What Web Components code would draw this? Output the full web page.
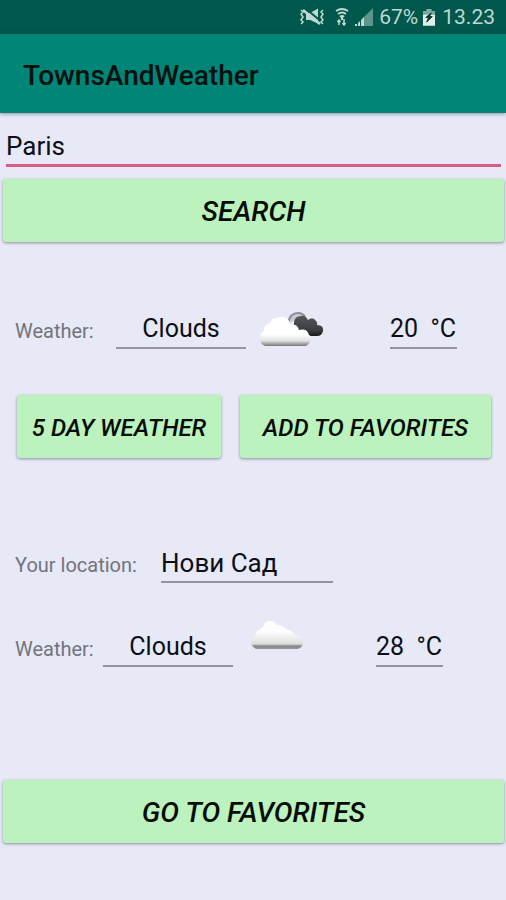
<!DOCTYPE html>
<html lang="en">
<head>
<meta charset="utf-8">
<meta name="viewport" content="width=device-width, initial-scale=1">
<title>TownsAndWeather</title>
<style>
  body { margin: 0; min-height: 100vh; background: #e7e9f6; color: #0d0f16; font-family: Roboto, "Noto Sans", sans-serif; }
</style>
</head>
<body>
<weather-app></weather-app>
<script>
function define(name, html, setup) {
  const template = document.createElement('template');
  template.innerHTML = html;
  customElements.define(name, class extends HTMLElement {
    static observedAttributes = ['value', 'label', 'condition', 'temperature'];
    constructor() {
      super();
      this.attachShadow({ mode: 'open' }).append(template.content.cloneNode(true));
    }
    connectedCallback() { if (setup) setup(this, this.shadowRoot); }
    attributeChangedCallback() { if (setup) setup(this, this.shadowRoot); }
  });
}

define('status-bar', `
  <style>
    :host { display: flex; align-items: center; justify-content: flex-end; height: 34px; padding: 0 11px 0 0; background: #00574b; color: #bfd8d3; font-size: 21px; line-height: 34px; }
    svg { display: block; flex: none; }
    .mute { margin-right: 9px; }
    .wifi { margin-right: 6px; }
    .signal { margin-right: 6px; }
    .battery { margin: 0 7px 0 5px; }
  </style>
  <svg class="mute" width="27" height="20" viewBox="0 0 27 20" fill="none" stroke="#bfd8d3" aria-hidden="true">
    <path d="M7 6h4l8-4.500v15L11 13H7z" fill="#bfd8d3" stroke="none"/>
    <path d="M6 1l18 15" stroke="#00574b" stroke-width="2"/>
    <path d="M4 3l17 14" stroke-width="2.500"/>
    <path d="M2 3l2 2-2 2 2 3-2 3 2 2-2 2M24 3l-2 2 2 2-2 3 2 3-2 2 2 2" stroke-width="1.500"/>
  </svg>
  <svg class="wifi" width="14" height="18" viewBox="0 0 14 18" fill="none" stroke="#bfd8d3" aria-hidden="true">
    <path d="M1 3q6-4 12 0M3 6q4-3 8 0M5 9q2-2 4 0" stroke-width="1.800"/>
    <path d="M7 9v3" stroke-width="2"/>
    <path d="M4 12v5M2.500 14L4 12l1.500 2M9 11v5M7.500 15L9 17l1.500-2" stroke-width="1.500"/>
  </svg>
  <svg class="signal" width="18" height="18" viewBox="0 0 18 18" aria-hidden="true">
    <path d="M18 0v18H8V10z" fill="#5d948b"/>
    <path d="M9 9v9H6v-6zM5 13v5H3v-3zM2 16v2H0v-2z" fill="#bfd8d3"/>
  </svg>
  <span>67%</span>
  <svg class="battery" width="12" height="17" viewBox="0 0 13 18" aria-hidden="true">
    <path d="M4 0h5v2h4v16H0V2h4z" fill="#e4efec"/>
    <path d="M4 0h5v2h4v4H0V2h4z" fill="#7ba8a0"/>
    <path d="M9 4L3 9h3l-2 5 6-6H7z" fill="#00332c" stroke="#00332c"/>
  </svg>
  <span>13.23</span>`);

define('app-bar', `
  <style>
    :host { display: flex; align-items: center; height: 79px; padding: 0 23px; background: #008577; color: #04110f; box-shadow: 0 1px 4px rgba(40, 40, 60, .45); }
    h1 { margin: 0; padding-top: 4px; font-size: 28px; line-height: 32px; font-weight: 500; }
  </style>
  <h1><slot></slot></h1>`);

define('action-button', `
  <style>
    :host { display: block; }
    button { display: block; width: 100%; height: 63px; margin: 0; padding: 2px 0 0; border: 0; border-radius: 3px; background: #bbf2bd; color: #060b06; box-shadow: 0 1px 3px rgba(50, 50, 80, .5); font: italic 500 var(--button-size, 24px)/32px Roboto, sans-serif; text-transform: uppercase; white-space: nowrap; cursor: pointer; }
  </style>
  <button type="button"><slot></slot></button>`);

define('text-field', `
  <style>
    :host { display: block; }
    input { display: block; box-sizing: border-box; width: 100%; height: 40px; margin: 0; padding: 1px 0 0; border: 0; border-bottom: var(--line, 2px solid #93959f); border-radius: 0; outline: 0; background: transparent; color: inherit; font: var(--field-size, 26px)/32px Roboto, "Noto Sans", sans-serif; text-align: left; }
  </style>
  <input type="text">`, (host, root) => {
    const input = root.querySelector('input');
    input.value = host.getAttribute('value') || '';
    input.setAttribute('aria-label', host.getAttribute('label') || '');
  });

define('labelled-field', `
  <style>
    :host { display: flex; align-items: center; }
    label { flex: none; width: var(--label-width); padding-top: 3px; font-size: 20px; line-height: 24px; color: #72747d; }
    input { display: block; box-sizing: border-box; width: var(--field-width); height: 40px; margin: 0; padding: 1px 0 0; border: 0; border-bottom: 2px solid #93959f; border-radius: 0; outline: 0; background: transparent; color: inherit; font: var(--field-size, 26px)/32px Roboto, "Noto Sans", sans-serif; text-align: var(--align, left); }
  </style>
  <label for="field"><slot></slot></label>
  <input id="field" type="text">`, (host, root) => {
    root.querySelector('input').value = host.getAttribute('value') || '';
  });

define('broken-clouds', `
  <style>:host { display: block; } svg { display: block; }</style>
  <svg width="64" height="36" viewBox="0 0 64 36" role="img" aria-label="Broken clouds">
    <defs>
      <linearGradient id="w" x2="0" y2="1"><stop offset=".6" stop-color="#fff"/><stop offset=".82" stop-color="#e2e2e2"/><stop offset="1" stop-color="#777"/></linearGradient>
      <linearGradient id="d" x2="0" y2="1"><stop stop-color="#55565a"/><stop offset=".7" stop-color="#3c3d40"/><stop offset="1" stop-color="#18191b"/></linearGradient>
    </defs>
    <path d="M28 12Q30 2 38 2q5 0 7 4" fill="#c8c9d0" stroke="#8b8c91" stroke-width="2"/>
    <path d="M34 11q1-6 7-6 4-1 7 4 5-4 8 1 2 2 1 4 7 0 6 6-1 5-6 5H46L34 17z" fill="url(#d)"/>
    <path d="M5 35q-5-2-5-7 0-6 4-8-1-6 6-8 2-6 8-5 3-2 7-1 4 2 5 7 8 0 9 6 8-2 10 5 3 1 2 4-1 5-5 7z" fill="url(#w)"/>
  </svg>`);

define('single-cloud', `
  <style>:host { display: block; } svg { display: block; }</style>
  <svg width="53" height="30" viewBox="0 0 53 30" role="img" aria-label="Cloud">
    <defs><linearGradient id="c" x2="0" y2="1"><stop offset=".4" stop-color="#fdfdfd"/><stop offset=".82" stop-color="#dedede"/><stop offset=".9" stop-color="#858585"/><stop offset="1" stop-color="#999"/></linearGradient></defs>
    <path d="M5 29q-5-3-5-7 0-4 4-6 0-4 4-6 3-1 5-5 2-5 7-4 4 0 6 4 6 0 9 4 6 1 8 5 7 3 8 6 2 3 0 6-1 2-4 3z" fill="url(#c)"/>
  </svg>`);

define('weather-row', `
  <style>
    :host { display: flex; align-items: center; padding: 0 var(--end, 49px) 0 15px; --field-size: 25px; }
    labelled-field { --field-width: 130px; --align: center; }
    ::slotted(*) { margin-left: var(--icon-gap, 14px); }
    text-field { width: 67px; margin-left: auto; }
  </style>
  <labelled-field>Weather:</labelled-field>
  <slot></slot>
  <text-field label="Temperature"></text-field>`, (host, root) => {
    root.querySelector('labelled-field').setAttribute('value', host.getAttribute('condition') || '');
    root.querySelector('text-field').setAttribute('value', host.getAttribute('temperature') || '');
  });

define('weather-app', `
  <style>
    :host { display: block; }
    main { display: flex; flex-direction: column; padding: 14px 0 24px; }
    .search { margin: 0 5px 0 6px; --line: 3px solid #d75c82; }
    .wide { margin: 12px 2px 0 3px; --button-size: 28px; }
    .searched { margin-top: 67px; --label-width: 101px; }
    .actions { display: flex; gap: 19px; margin: 46px 15px 0 17px; }
    .five { flex: 204 1 0; }
    .add { flex: 251 1 0; }
    .location { margin: 85px 15px 0; --label-width: 146px; --field-width: 172px; }
    .local { margin-top: 37px; --label-width: 88px; --end: 63px; --icon-gap: 18px; }
    single-cloud { padding-bottom: 24px; }
    .favorites { margin-top: 106px; }
  </style>
  <status-bar></status-bar>
  <app-bar>TownsAndWeather</app-bar>
  <main>
    <text-field class="search" label="Town" value="Paris"></text-field>
    <action-button class="wide">Search</action-button>
    <weather-row class="searched" condition="Clouds" temperature="20  °C"><broken-clouds></broken-clouds></weather-row>
    <div class="actions">
      <action-button class="five">5 day weather</action-button>
      <action-button class="add">Add to favorites</action-button>
    </div>
    <labelled-field class="location" value="Нови Сад">Your location:</labelled-field>
    <weather-row class="local" condition="Clouds" temperature="28  °C"><single-cloud></single-cloud></weather-row>
    <action-button class="wide favorites">Go to favorites</action-button>
  </main>`);
</script>
</body>
</html>
